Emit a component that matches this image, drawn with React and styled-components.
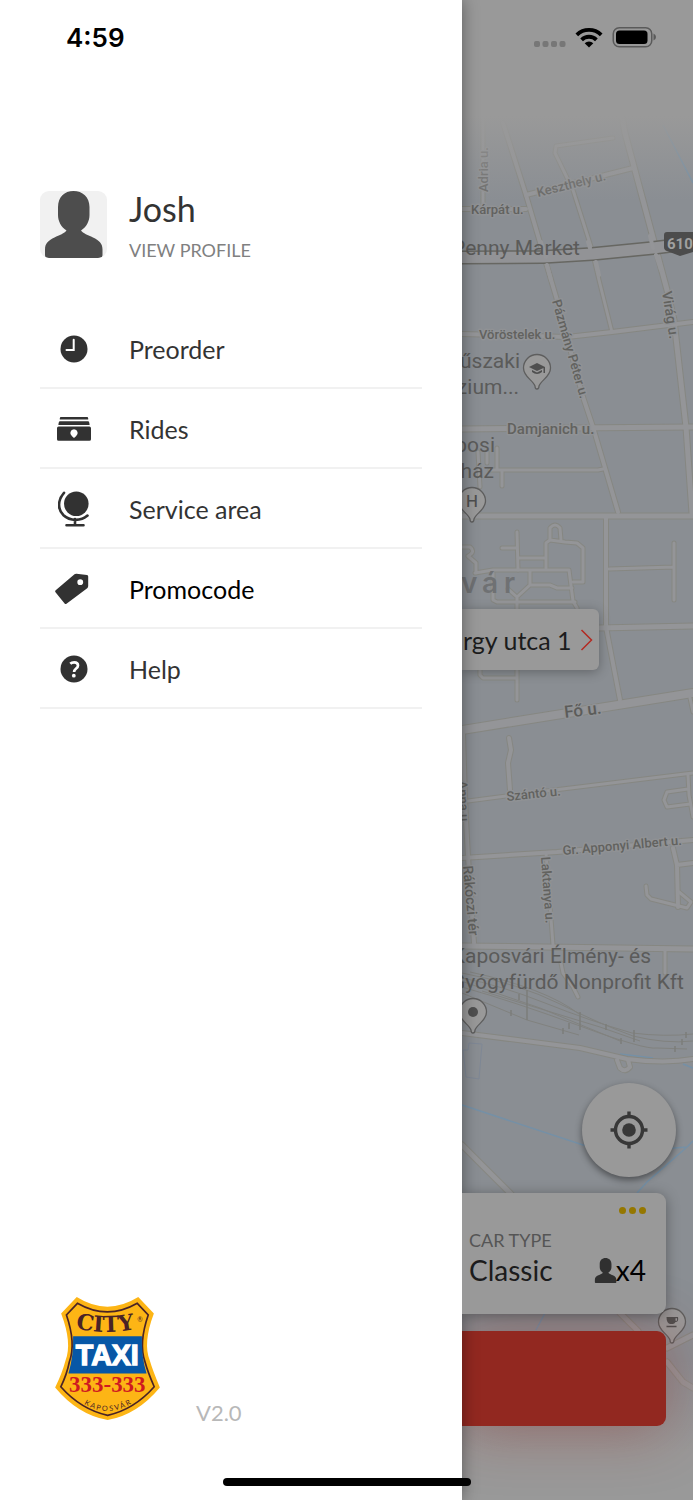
import React from "react";
import styled, { createGlobalStyle } from "styled-components";

const GlobalStyle = createGlobalStyle`
  *, *::before, *::after { box-sizing: border-box; }
  body { margin: 0; background: #999; font-family: Lato, "Liberation Sans", sans-serif; }
  a { color: inherit; text-decoration: none; }
  button { border: 0; margin: 0; padding: 0; font: inherit; color: inherit; cursor: pointer; }
`;

const Screen = styled.div`
  position: relative;
  display: grid;
  grid-template-columns: 2fr 1fr;
  min-height: 100vh;
  overflow: hidden;
`;

/* Drawer */

const Drawer = styled.aside`
  position: relative;
  z-index: 1;
  display: flex;
  flex-direction: column;
  padding: 24px 40px 80px;
  background: #fff;
  box-shadow: 0 0 16px rgba(0, 0, 0, 0.4);
`;

const Clock = styled.time`
  padding-left: 26px;
  font: 600 26px/28px Inter, "Liberation Sans", sans-serif;
  color: #000;
`;

const Profile = styled.a`
  display: flex;
  gap: 22px;
  margin-top: 139px;
`;

const Avatar = styled.span`
  width: 67px;
  height: 67px;
  border-radius: 9px;
  overflow: hidden;
  background: #f1f1f1;
`;

const ProfileText = styled.span`
  display: flex;
  flex-direction: column;
  gap: 12px;
`;

const Name = styled.strong`
  font-weight: 400;
  font-size: 34px;
  line-height: 36px;
  color: #333;
`;

const Caption = styled.span`
  font-size: 18px;
  line-height: 22px;
  color: ${(p) => p.$color};
`;

const Menu = styled.nav`
  display: flex;
  flex-direction: column;
  margin-top: 48px;
`;

const MenuItem = styled.a`
  display: flex;
  align-items: center;
  gap: 22px;
  height: 80px;
  padding-top: 2px;
  border-bottom: 2px solid #f1f1f1;
  font-size: 25px;
  line-height: 32px;
  color: ${(p) => (p.$active ? "#000" : "#333")};
`;

const IconCell = styled.span`
  display: flex;
  justify-content: center;
  width: 67px;
  color: #323232;
`;

const DrawerFooter = styled.footer`
  display: flex;
  align-items: flex-end;
  gap: 36px;
  margin-top: auto;
  padding-left: 15px;
`;

const Version = styled.span`
  font-size: 22px;
  line-height: 14px;
  color: #b8b8b8;
`;

/* Map side */

const MapPane = styled.main`
  position: relative;
  display: flex;
  flex-direction: column;
  align-items: flex-start;
  padding-bottom: 74px;
  overflow: hidden;
  background: #8a8e93;
`;

const MapDrawing = styled.svg`
  position: absolute;
  inset: 0;
  width: 100%;
  height: 100%;
`;

const StatusIcons = styled.div`
  position: relative;
  align-self: flex-end;
  display: flex;
  align-items: flex-end;
  gap: 9px;
  height: 48px;
  padding-right: 36px;
`;

const AddressPill = styled.button`
  position: relative;
  display: flex;
  align-items: center;
  gap: 8px;
  height: 61px;
  margin-top: 561px;
  padding: 0 6px 0 1px;
  border-radius: 0 6px 6px 0;
  background: #999;
  box-shadow: 0 2px 12px rgba(0, 0, 0, 0.3);
  font-size: 25px;
  line-height: 32px;
  color: #1c1c1c;
`;

const LocateButton = styled.button`
  position: relative;
  align-self: flex-end;
  display: grid;
  place-items: center;
  width: 94px;
  height: 94px;
  margin: auto 17px 16px 0;
  border-radius: 50%;
  background: #999;
  box-shadow: 0 3px 7px rgba(0, 0, 0, 0.45);
`;

const BottomSheet = styled.div`
  position: relative;
  display: flex;
  flex-direction: column;
  align-self: stretch;
  gap: 17px;
  padding-right: 27px;
`;

const CarCard = styled.section`
  position: relative;
  z-index: 1;
  display: flex;
  flex-direction: column;
  height: 121px;
  padding: 14px 20px 0 7px;
  border-radius: 0 9px 9px 0;
  background: #999;
  box-shadow: 0 2px 14px rgba(0, 0, 0, 0.35);
`;

const MoreButton = styled.button`
  display: flex;
  align-self: flex-end;
  gap: 3px;
  height: 8px;
  background: none;
`;

const Dot = styled.i`
  width: 7px;
  height: 7px;
  border-radius: 50%;
  background: #957700;
`;

const CarLabel = styled(Caption)`
  margin-top: 14px;
`;

const CarRow = styled.div`
  display: flex;
  align-items: center;
  justify-content: space-between;
  font-size: 28px;
  line-height: 38px;
  color: #1c1c1c;
`;

const Seats = styled.span`
  display: flex;
  align-items: center;
  color: #000;
  svg { margin-right: -2px; }
`;

const OrderButton = styled.button`
  height: 95px;
  border-radius: 0 9px 9px 0;
  background: #922820;
  box-shadow: 0 4px 60px rgba(146, 40, 32, 0.4);
`;

const HomeIndicator = styled.div`
  position: absolute;
  z-index: 2;
  left: 50%;
  bottom: 14px;
  width: 248px;
  height: 8px;
  margin-left: -124px;
  border-radius: 4px;
  background: #000;
`;

const Person = ({ size, color }) => (
  <svg width={size} height={size} viewBox="0 0 67 67" aria-hidden="true">
    <path
      fill={color}
      d="M33.500 0C42.500 0 49.500 6 49.500 16v8c0 6-3 12-8.500 15.500 2 3 7 4.500 12 7 6 3 9.500 5.500 9.500 12V64c0 2-1 3-3 3H8c-2 0-3-1-3-3v-5.500c0-6.500 3.500-9 9.500-12 5-2.500 10-4 12-7C21 36 18 30 18 24v-8C18 6 24.500 0 33.500 0z"
    />
  </svg>
);

const ClockIcon = () => (
  <svg width="28" height="28" viewBox="0 0 28 28">
    <circle cx="14" cy="14" r="13.500" fill="currentColor" />
    <path d="M13.700 4.800V15H6.500" fill="none" stroke="#fff" strokeWidth="2" strokeLinecap="round" />
  </svg>
);

const RidesIcon = () => (
  <svg width="34" height="24" viewBox="0 0 34 24">
    <path fill="currentColor" d="M4 0h26q1.200 0 1.200 1.200V2.600H2.800V1.200Q2.800 0 4 0zM2.800 4.200h28.400q1.200 0 1.400 3.800H1.400q.2-3.800 1.400-3.800zM1.600 9.600h30.800q1.600 0 1.600 1.600v11q0 1.600-1.600 1.600H1.600Q0 23.800 0 22.200v-11q0-1.600 1.600-1.600z" />
    <path fill="#fff" d="M17 12.200a3.900 3.900 0 0 1 2 7.100L17 21l-2-1.700a3.900 3.900 0 0 1 2-7.100z" />
  </svg>
);

const GlobeIcon = () => (
  <svg width="32" height="36" viewBox="0 0 32 36">
    <circle cx="18.300" cy="12.700" r="12.300" fill="currentColor" />
    <path d="M6 1.800C-.5 9-.5 18.500 5.500 24.300c6.500 6 17.500 6 24 .3M17 28v5.500M8.500 34.300h17" fill="none" stroke="currentColor" strokeWidth="2.600" strokeLinecap="round" />
  </svg>
);

const TagIcon = () => (
  <svg width="38" height="32" viewBox="2 0 38 32">
    <path fill="currentColor" fillRule="evenodd" d="M23.500.7 34 2q1.200.2 1.200 1.400V13q0 1.500-1 2.300L13.500 30.700q-1 .8-1.900-.2L2.500 19.200q-.8-1 .2-1.900L21.500 1.300q.9-.8 2-.6zM27.200 6.200a2.900 2.900 0 1 0 .1 5.800 2.900 2.900 0 0 0-.1-5.800z" />
  </svg>
);

const HelpIcon = () => (
  <svg width="28" height="28" viewBox="0 0 28 28">
    <circle cx="14" cy="14" r="13.500" fill="currentColor" />
    <path d="M10.300 8.700c1-1 2.400-1.400 3.900-1.400 2.200 0 3.800 1.100 3.800 3.200 0 3.200-3.900 2.900-3.900 6.600" fill="none" stroke="#fff" strokeWidth="2.700" />
    <circle cx="13.800" cy="20.700" r="1.900" fill="#fff" />
  </svg>
);

const MENU = [
  { label: "Preorder", Icon: ClockIcon },
  { label: "Rides", Icon: RidesIcon },
  { label: "Service area", Icon: GlobeIcon },
  { label: "Promocode", Icon: TagIcon, active: true },
  { label: "Help", Icon: HelpIcon },
];

const Logo = () => (
  <svg width="105" height="123" viewBox="45 38 315 370" role="img" aria-label="City Taxi 333-333 Kaposvár">
    <path fill="#fdb515" d="M110 38q92 58 185 0l47 50q-34 90-12 142 8 28 30 80-68 82-157 98Q113 392 45 310q21-42 31-80Q97 177 63 88z" />
    <path fill="none" stroke="#4a2326" strokeWidth="5" d="M112 57q90 52 180 0l33 35q-29 85-10 140 8 30 28 76-60 68-140 86Q122 376 62 308q18-36 26-76 20-55-9-140z" />
    <path fill="#0757a6" d="M99 156h207q-2 60 14 112H85q16-54 14-112z" />
    <path id="city-arc" fill="none" d="M92 128q108 30 220 0" />
    <path id="town-arc" fill="none" d="M112 346q88 70 182 0" />
    <text fontFamily="'DejaVu Serif', serif" fontWeight="700" fontSize="66" fill="#4a2326" textAnchor="middle">
      <textPath href="#city-arc" startOffset="47%">CITY</textPath>
    </text>
    <text x="292" y="112" fontFamily="Lato, sans-serif" fontSize="20" fill="#4a2326">®</text>
    <text x="202" y="243" textAnchor="middle" fontFamily="'Liberation Sans', sans-serif" fontWeight="700" fontSize="86" fill="#fff" stroke="#fff" strokeWidth="4">TAXI</text>
    <text x="202" y="323" textAnchor="middle" fontFamily="'Liberation Serif', serif" fontWeight="700" fontSize="69" fill="#cf1a20">333-333</text>
    <text fontFamily="Lato, sans-serif" fontSize="22" fill="#4a2326" textAnchor="middle">
      <textPath href="#town-arc" startOffset="50%">K A P O S V Á R</textPath>
    </text>
  </svg>
);

/* [path, width] */
const ROADS = [
  ["M483 110V205", 3],
  ["M462 209H526", 4],
  ["M503 123 526 195 557 300 583 397 593 427 618 512", 4],
  ["M526 195 633 168", 4],
  ["M613 138 556 146 555 153 573 190 592 250 599 280 612 332", 3],
  ["M622 117 625 133 667 290 674 320 686 427 692 513", 5],
  ["M462 334 567 337 612 332 693 322", 4],
  ["M462 429 693 427", 5],
  ["M490 470H598L603 469M497 448V470M502 470V486M478 452 480 487M487 452V463", 3],
  ["M462 516H693", 5],
  ["M606 516V627L620 700", 4],
  ["M609 569 674 567M674 543V600", 3],
  ["M517 532 518 570M502 548H517M518 558H546M546 568V543L550 540 565 542 577 543 583 548V582H573M550 540V528Q555 522 560 528L561 540", 3],
  ["M475 573 493 570H569L573 601 577 608M462 547 470 547Q476 552 468 556L476 563V573", 3],
  ["M517 597 530 585H550L557 588H572M530 585V571M493 573V600L497 602H575M508 589 517 597V700M480 670V675L483 678H517", 3],
  ["M598 628 693 626", 5],
  ["M463 733 465 800 468 857 474 943", 4],
  ["M462 730 693 693", 8],
  ["M509 738 511 750 508 763 510 790", 4],
  ["M468 801 530 793 693 773", 3],
  ["M688 775 689 795 693 817M688 789 667 792 664 800 667 807 690 804M690 698 693 712", 3],
  ["M462 858 557 852 693 840", 4],
  ["M546 853 553 945", 3],
  ["M462 946 693 949", 5],
  ["M673 848 677 865 678 907M677 865 693 863", 4],
  ["M646 886 647 895 651 899 687 908 691 902 679 892", 3],
  ["M665 950V973M561 963 563 973 573 987 578 997", 3],
  ["M462 1033 580 1048 627 1059 Q665 1064 693 1059M617 1060 620 1068Q625 1073 630 1067L628 1060", 4],
  ["M462 1145 510 1193 620 1313 638 1331M667 1348 693 1335M667 1362 683 1382 693 1388", 5],
];

const RAILS =
  "M462 978Q500 985 545 1003T632 1033Q665 1037 693 1034M462 973Q520 984 560 1004T633 1036Q665 1044 693 1041M462 987Q515 1002 580 1026T657 1048L687 1049M462 993 527 1020 579 1035M470 972Q545 988 579 1014M482 991 600 1027 640 1041M464 982 540 1008 620 1041";

const RAIL_MARKS =
  "M527 990V1020M511 1010V1016M519 994V1000M569 1023V1029M580 1012V1030M606 1024V1030M621 1038V1044M634 1030V1042M675 1046V1052M686 1032V1038M682 1039V1045M563 1028V1034";

const WATER =
  "M663 125 693 183M620 1054 653 1058M683 1064 693 1068M462 1105 583 1145 650 1150 687 1147 693 1141M687 1147 647 1182 637 1193M545 1313 536 1330";

/* text, x, y, size, angle, colour */
const STREETS = [
  ["Adria u.", 488, 192, 13, -90, "#6c6c6b"],
  ["Keszthely u.", 538, 197, 13, -14, "#696967"],
  ["Kárpát u.", 471, 214, 13, 0, "#62625f"],
  ["Vöröstelek u.", 479, 339, 13, 0, "#62625f"],
  ["Pázmány Péter u.", 552, 301, 13, 74, "#62625f"],
  ["Virág u.", 662, 292, 14, 81, "#62625f"],
  ["Damjanich u.", 507, 434, 15, 0, "#62625f"],
  ["Fő u.", 565, 718, 17, -7, "#5c5c5a"],
  ["Szántó u.", 507, 801, 13, -6, "#62625f"],
  ["Anna u.", 458, 781, 13, 87, "#62625f"],
  ["Gr. Apponyi Albert u.", 563, 855, 13, -5, "#62625f"],
  ["Laktanya u.", 541, 857, 13, 86, "#62625f"],
  ["Rákóczi tér", 463, 866, 14, 85, "#62625f"],
];

const PLACES = [
  ["Penny Market", 580, 255],
  ["űszaki", 520, 368],
  ["zium...", 519, 394],
  ["posi", 495, 452],
  ["ház", 494, 478],
  ["Kaposvári Élmény- és", 651, 963],
  ["Gyógyfürdő Nonprofit Kft", 684, 989],
];

const Pin = ({ x, y, children }) => (
  <g transform={`translate(${x} ${y})`}>
    <path d="M0 21Q-2 21-2 18C-4 12-13.500 9-13.500 0a13.500 13.500 0 0 1 27 0C13.500 9 4 12 2 18Q2 21 0 21z" fill="#999" stroke="#5e5e5e" strokeWidth="1.300" />
    {children}
  </g>
);

const CityMap = () => (
  <MapDrawing viewBox="462 0 231 1500" preserveAspectRatio="xMinYMin slice" role="img" aria-label="Map of Kaposvár">
    <defs>
      <linearGradient id="fade-top" x1="0" y1="0" x2="0" y2="1">
        <stop offset="0.580" stopColor="#999" />
        <stop offset="1" stopColor="#999" stopOpacity="0" />
      </linearGradient>
      <linearGradient id="fade-bottom" x1="0" y1="0" x2="0" y2="1">
        <stop offset="0" stopColor="#999" stopOpacity="0" />
        <stop offset="0.650" stopColor="#999" />
      </linearGradient>
    </defs>
    <rect x="462" width="231" height="1500" fill="#8a8e93" />
    <path d={WATER} fill="none" stroke="#7590a6" strokeWidth="1.500" />
    <path d={RAILS} fill="none" stroke="#81827f" strokeWidth="1" />
    <path d={RAIL_MARKS} fill="none" stroke="#7c7d7b" strokeWidth="1.500" />
    <path d="M463 1050H468L469 1043 482 1044 479 1079 466 1077z" fill="none" stroke="#7f8896" />
    <g fill="none" strokeLinejoin="round" strokeLinecap="round">
      {ROADS.map(([d, w]) => <path key={d} d={d} stroke="#868782" strokeWidth={w + 2} />)}
      {ROADS.map(([d, w]) => <path key={d} d={d} stroke="#949598" strokeWidth={w} />)}
      <path d="M462 257.500 543 257 592 254 653 248 693 243" stroke="#676762" strokeWidth="14" />
      <path d="M462 257.500 543 257 592 254 653 248 693 243" stroke="#929396" strokeWidth="11" />
      <path d="M547 265 551 280M596 262 599 275M656 255 661 270M541 242 546 257M588 242 590 248M650 236 653 248" stroke="#949598" strokeWidth="4" />
    </g>
    <g fontFamily="Roboto, sans-serif" fontWeight="500" stroke="#909295" strokeWidth="3" strokeLinejoin="round" paintOrder="stroke">
      {STREETS.map(([t, x, y, size, angle, color]) => (
        <text key={t} fontSize={size} fill={color} transform={`translate(${x} ${y}) rotate(${angle})`}>{t}</text>
      ))}
    </g>
    <g fontFamily="Roboto, sans-serif" fontSize="21" textAnchor="end" fill="#5b5b5a">
      {PLACES.map(([t, x, y]) => <text key={t} x={x} y={y}>{t}</text>)}
    </g>
    <text x="461 482 504" y="593" fontFamily="Inter, sans-serif" fontWeight="600" fontSize="28" fill="#6f7173">vár</text>
    <path d="M667 232H693V252L680 256 667 251Q664 250 664 247V235Q664 232 667 232z" fill="#4c4c4c" />
    <text x="667" y="249" fontFamily="Roboto, sans-serif" fontWeight="700" fontSize="15" fill="#a0a0a0">610</text>
    <Pin x={537} y={368}>
      <path fill="#4f4f4f" d="M-8-1 0-5 8-1V5H6.500V0L0 3zM-5 2 0 4.500 5 2V4Q0 8-5 4z" />
    </Pin>
    <Pin x={472} y={501}>
      <text y="6" textAnchor="middle" fontFamily="Inter, sans-serif" fontWeight="500" fontSize="16" fill="#4f4f4f">H</text>
    </Pin>
    <Pin x={473} y={1012}>
      <circle r="5" fill="#4f4f4f" />
    </Pin>
    <Pin x={672} y={1322}>
      <path fill="#4f4f4f" fillRule="evenodd" d="M-5.500-5H6Q7 0 3.500 0 2.500 2 .8 2H-2Q-5.500 1-5.500-5zM3.500-3.800V-1.200H5V-3.800zM-5.500 3.800H4.500V5.300H-5.500z" />
    </Pin>
    <rect x="462" width="231" height="200" fill="url(#fade-top)" />
    <rect x="462" y="1360" width="231" height="140" fill="url(#fade-bottom)" />
  </MapDrawing>
);

const SignalIcon = () => (
  <svg width="32" height="8" viewBox="0 0 32 8" fill="#777">
    {[0, 8.500, 17, 25.500].map((x) => <rect key={x} x={x} y="1" width="6" height="6" rx="2" />)}
  </svg>
);

const WifiIcon = () => (
  <svg width="28" height="21" viewBox="0 0 28 21">
    <g fill="none" stroke="#000" strokeWidth="3.800">
      <path d="M1.800 7.800a17.500 17.500 0 0 1 24.400 0" />
      <path d="M6.600 12.800a10.500 10.500 0 0 1 14.800 0" />
    </g>
    <path d="M14 20.500 9.700 16.200a6.200 6.200 0 0 1 8.600 0z" />
  </svg>
);

const BatteryIcon = () => (
  <svg width="45" height="22" viewBox="0 0 45 22">
    <rect x="1.250" y="1.750" width="38.500" height="19" rx="6" fill="none" stroke="#5a5a5a" strokeWidth="1.500" />
    <rect x="4" y="4.500" width="31.500" height="13.500" rx="3.500" />
    <path d="M41.500 7.500q2.500 1 2.500 3.500t-2.500 3.500z" fill="#5a5a5a" />
  </svg>
);

const LocateIcon = () => (
  <svg width="38" height="38" viewBox="0 0 38 38" fill="none" stroke="#383838" strokeWidth="3.400">
    <circle cx="19" cy="19" r="13.500" />
    <circle cx="19" cy="19" r="6.800" fill="#383838" stroke="none" />
    <path d="M19 .5V5M19 33v4.500M.5 19H5M33 19h4.500" />
  </svg>
);

export default function App() {
  return (
    <>
      <GlobalStyle />
      <Screen>
        <Drawer>
          <Clock>4:59</Clock>
          <Profile href="#profile">
            <Avatar><Person size={67} color="#4d4d4d" /></Avatar>
            <ProfileText>
              <Name>Josh</Name>
              <Caption $color="#808080">VIEW PROFILE</Caption>
            </ProfileText>
          </Profile>
          <Menu>
            {MENU.map(({ label, Icon, active }) => (
              <MenuItem key={label} href={`#${label}`} $active={active}>
                <IconCell aria-hidden="true"><Icon /></IconCell>
                {label}
              </MenuItem>
            ))}
          </Menu>
          <DrawerFooter>
            <Logo />
            <Version>V2.0</Version>
          </DrawerFooter>
        </Drawer>
        <MapPane>
          <CityMap />
          <StatusIcons>
            <SignalIcon />
            <WifiIcon />
            <BatteryIcon />
          </StatusIcons>
          <AddressPill>
            rgy utca 1
            <svg width="13" height="22" viewBox="0 0 13 22" fill="none" stroke="#b32a22" strokeWidth="1.500">
              <path d="M1.500 1 11.500 11 1.500 21" />
            </svg>
          </AddressPill>
          <LocateButton aria-label="My location"><LocateIcon /></LocateButton>
          <BottomSheet>
            <CarCard>
              <MoreButton aria-label="More car types"><Dot /><Dot /><Dot /></MoreButton>
              <CarLabel $color="#555">CAR TYPE</CarLabel>
              <CarRow>
                Classic
                <Seats><Person size={25} color="#303030" />x4</Seats>
              </CarRow>
            </CarCard>
            <OrderButton aria-label="Order" />
          </BottomSheet>
        </MapPane>
        <HomeIndicator />
      </Screen>
    </>
  );
}
